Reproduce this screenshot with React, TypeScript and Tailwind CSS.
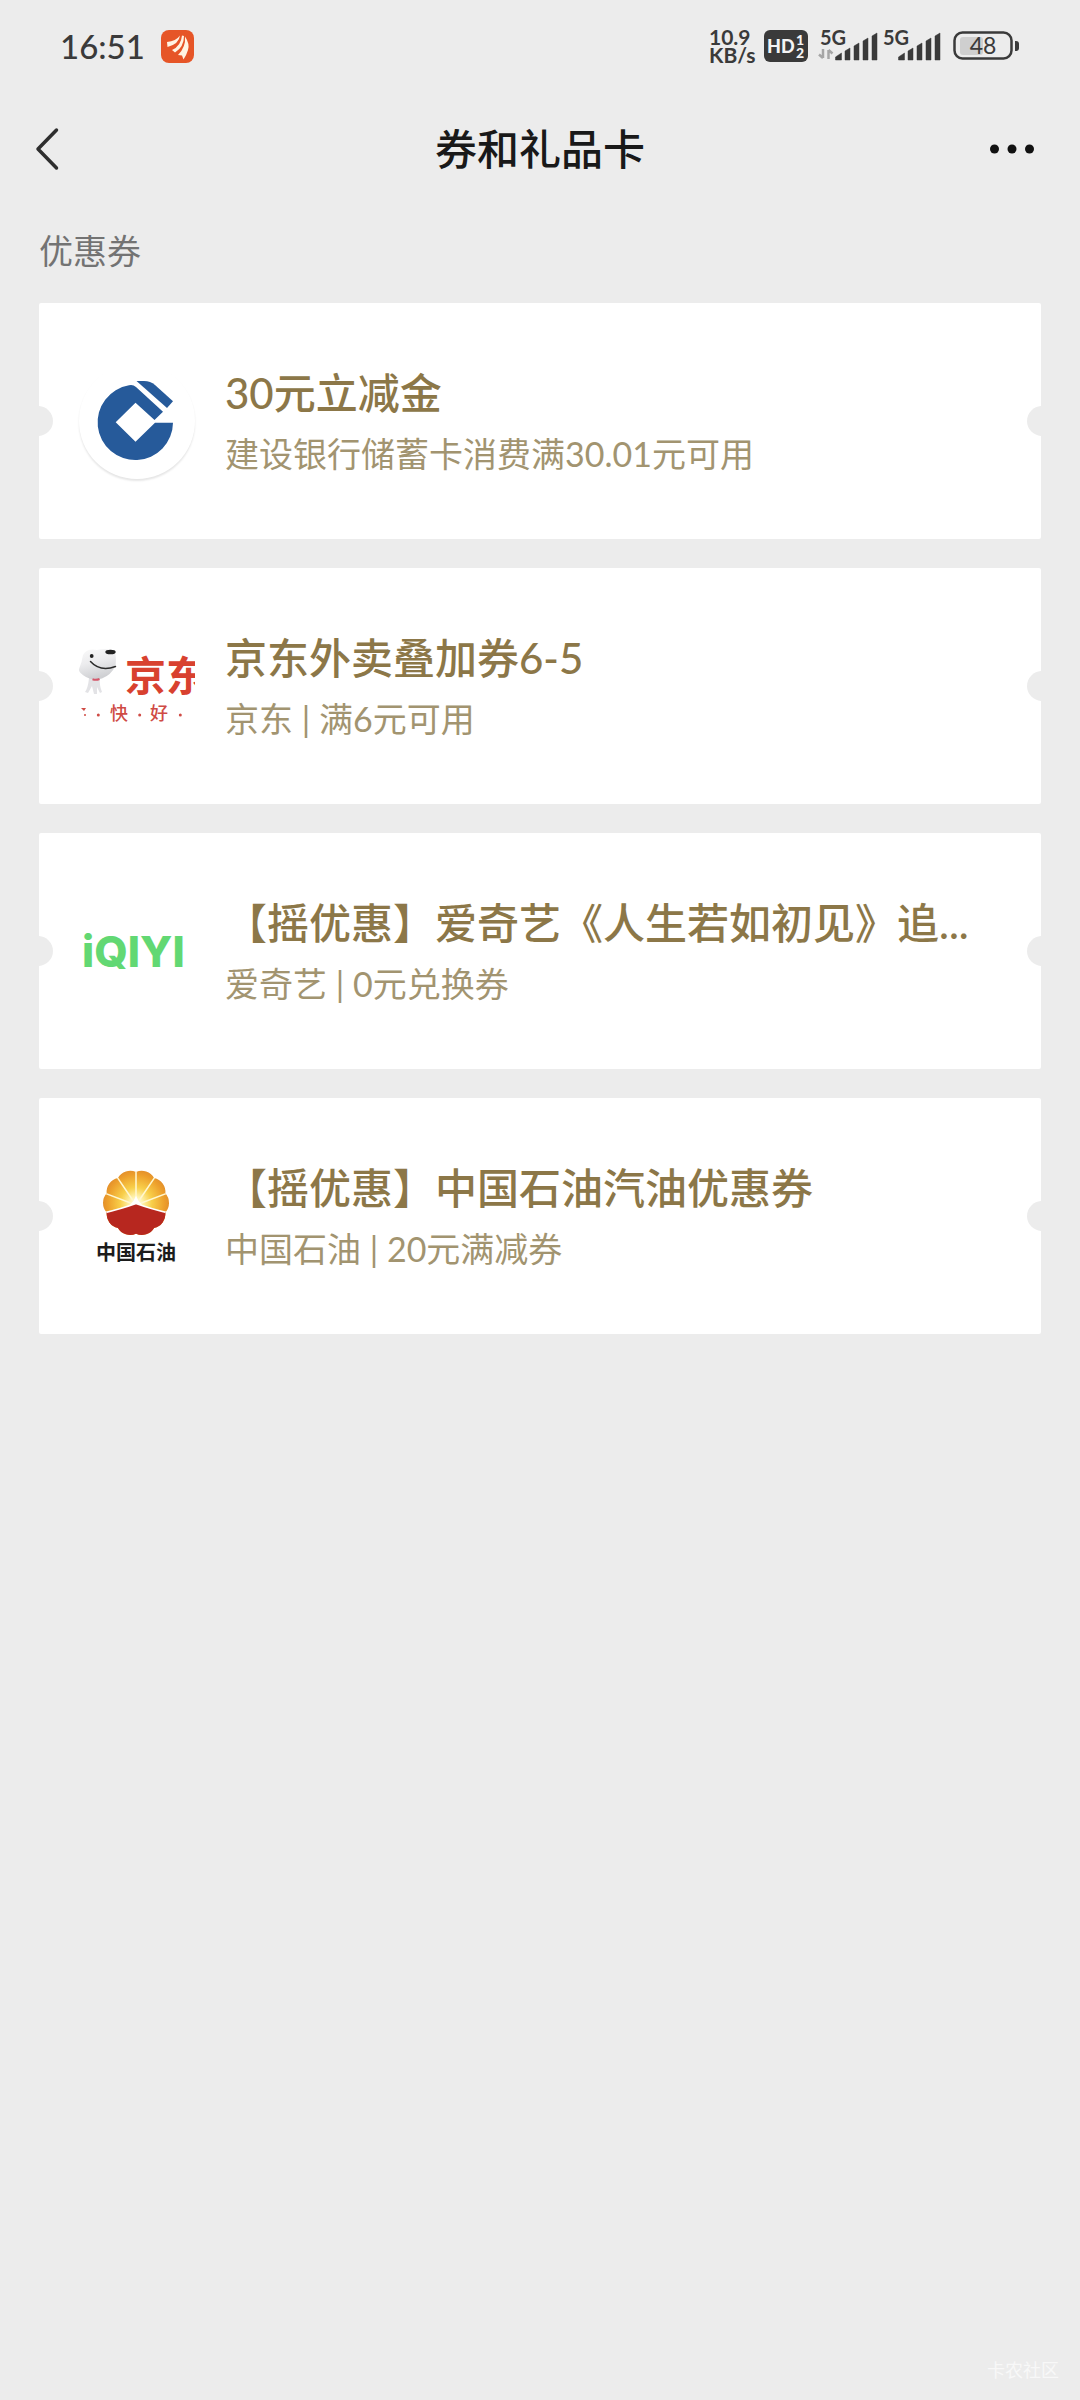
import type { ReactNode } from "react";

function CcbLogo() {
  return (
    <div className="size-[116px] shrink-0 rounded-full bg-white shadow-[0_2px_2px_rgba(0,0,0,0.10)]">
      <svg viewBox="0 0 116 116" className="size-full" role="img" aria-label="中国建设银行">
        <g fill="#265a9a">
          <path d="M94 59.7A37.7 37.7 0 1 1 50 22.2Q54 21.2 57 24L84 48.8L75.5 57L56.5 39.7L36.7 59.3L56.5 78.7L76 59.7Z" />
          <path d="M57.5 18H65Q71.5 18 76 22L94 38.2L88 45Z" />
        </g>
      </svg>
    </div>
  );
}

function JdLogo() {
  return (
    <svg viewBox="0 0 116 116" className="size-[116px] shrink-0" role="img" aria-label="京东">
      <defs>
        <linearGradient id="dog" x1="0" y1="0" x2="0.3" y2="1">
          <stop offset="0" stopColor="#fafafa" />
          <stop offset="0.5" stopColor="#ececee" />
          <stop offset="1" stopColor="#cfd0d3" />
        </linearGradient>
      </defs>
      <path d="M10 50Q9 60 6 64L9 65L13 58L15 66L18 66L18 59L21 65L23 64Q20 57 21 49Z" fill="#e3e3e6" />
      <path d="M4 27Q8 20 18 22Q26 20 34 22Q38 25 36.500 38Q32 47 23 50.500Q13 53 7 49Q-1 44 0 41Q3 34 4 27Z" fill="url(#dog)" />
      <ellipse cx="31.500" cy="24" rx="5.200" ry="2.300" fill="#222" />
      <circle cx="12.700" cy="28" r="1.900" fill="#222" />
      <path d="M11.500 33.500Q21 44 36.500 38.500" fill="none" stroke="#2b2b2b" strokeWidth="1.500" strokeLinecap="round" />
      <path d="M13.500 51.200Q17 52.500 20.500 51" stroke="#d4576a" strokeWidth="2" fill="none" />
      <text x="46" y="63" fontSize="41" fontWeight="700" fill="#d8412f" className="font-['Noto_Sans_CJK_SC',sans-serif]">京东</text>
      <g fill="#cf4b45">
        <path d="M2 80H7L5 83Z" />
        <circle cx="6" cy="87" r="1" />
        <circle cx="19.300" cy="87" r="1.500" />
        <circle cx="60.700" cy="87" r="1.500" />
        <circle cx="101.300" cy="87" r="1.500" />
        <text x="31" y="92" fontSize="18" fontWeight="500" className="font-['Noto_Sans_CJK_SC',sans-serif]">快</text>
        <text x="71" y="92" fontSize="18" fontWeight="500" className="font-['Noto_Sans_CJK_SC',sans-serif]">好</text>
      </g>
    </svg>
  );
}

function IqiyiLogo() {
  return (
    <svg viewBox="0 0 116 116" className="size-[116px] shrink-0" role="img" aria-label="iQIYI">
      <text x="3" y="74" fontSize="43" fontWeight="800" fill="#62d873" className="font-[Inter,sans-serif]">iQIYI</text>
    </svg>
  );
}

const FLOWER =
  "M57 15A14 14 0 0 1 74.600 20.700A14 14 0 0 1 85.500 35.700A14 14 0 0 1 85.500 54.300A14 14 0 0 1 74.600 69.300A14 14 0 0 1 57 75A14 14 0 0 1 39.400 69.300A14 14 0 0 1 28.500 54.300A14 14 0 0 1 28.500 35.700A14 14 0 0 1 39.400 20.700A14 14 0 0 1 57 15Z";

function PetroLogo() {
  return (
    <svg viewBox="0 0 116 116" className="size-[116px] shrink-0" role="img" aria-label="中国石油">
      <defs>
        <radialGradient id="sun" gradientUnits="userSpaceOnUse" cx="57" cy="45" r="34">
          <stop offset="0" stopColor="#fffdf0" />
          <stop offset="0.18" stopColor="#fff3b0" />
          <stop offset="0.45" stopColor="#f8cf4a" />
          <stop offset="0.8" stopColor="#eda02c" />
          <stop offset="1" stopColor="#e08a2a" />
        </radialGradient>
        <clipPath id="petals">
          <path d={FLOWER} />
        </clipPath>
      </defs>
      <g transform="translate(-1.700 -1.400) scale(1.030)">
        <path d={FLOWER} fill="url(#sun)" />
        <g clipPath="url(#petals)">
          <path d="M57 47V10M57 47L36 16M57 47L78 16M57 47L24 34.500M57 47L90 34.500" stroke="#fff7d0" strokeWidth="1.500" />
          <path d="M20 56Q42 51 57 45.500Q72 51 94 56V90H20Z" fill="#b7271f" stroke="#fff" strokeWidth="1.500" />
        </g>
        <path d="M51 47L54.500 43L57 38L59.500 43L63 47L57 45Z" fill="#fff" />
      </g>
      <text x="17" y="102" fontSize="20" fontWeight="700" fill="#1c1c1c" className="font-['Noto_Sans_CJK_SC',sans-serif]">中国石油</text>
    </svg>
  );
}

type Coupon = { title: string; detail: string; logo: ReactNode };

const coupons: Coupon[] = [
  { title: "30元立减金", detail: "建设银行储蓄卡消费满30.01元可用", logo: <CcbLogo /> },
  { title: "京东外卖叠加券6-5", detail: "京东 | 满6元可用", logo: <JdLogo /> },
  { title: "【摇优惠】爱奇艺《人生若如初见》追...", detail: "爱奇艺 | 0元兑换券", logo: <IqiyiLogo /> },
  { title: "【摇优惠】中国石油汽油优惠券", detail: "中国石油 | 20元满减券", logo: <PetroLogo /> },
];

function Signal({ active }: { active?: boolean }) {
  return (
    <svg width="60" height="42" viewBox="0 -4 60 42" fill="#3a3a3a" className="overflow-visible" role="img" aria-label="5G">
      <text x="0" y="16" fontSize="20" fontWeight="700" className="font-[Lato,sans-serif]">5G</text>
      {active && (
        <path d="M3 20V29M3 29L-1 25.500M8.500 30V21M8.500 21L12.500 24.500" stroke="#a6a6a6" strokeWidth="2.500" fill="none" />
      )}
      <path d="M15.500 31V28L21.500 24V31ZM25 31V22L30 19V31ZM34 31V17L39 14V31ZM43 31V12L48 9V31ZM52 31V7L57 4V31Z" stroke="#3a3a3a" strokeWidth="0.500" strokeLinejoin="round" />
    </svg>
  );
}

function StatusBar() {
  return (
    <div className="flex h-[92px] items-center justify-between px-[60px] text-[#3a3a3a]">
      <div className="flex items-center gap-4">
        <time className="text-[33px] leading-none font-medium">16:51</time>
        <svg width="33" height="33" viewBox="0 0 33 33" aria-hidden="true">
          <rect width="33" height="33" rx="8" fill="#e65527" />
          <g fill="#fff4e2">
            <path d="M6 12Q15 11 19 5.500Q18 14 6.500 17Z" />
            <path d="M11 20Q20 16 21 5.500L23 6Q23 17 14 22.500Z" />
            <path d="M17 25Q25 17 24 6.500Q29 14 27 20Q25.500 25 22.500 29.500L21 25.500Z" />
          </g>
        </svg>
      </div>
      <div className="flex items-center">
        <p className="w-[55px] text-[21px] leading-[18px] font-bold">
          10.9
          <br />
          KB/s
        </p>
        <svg width="44" height="32" viewBox="0 0 44 32" className="mr-3" role="img" aria-label="HD 1 2">
          <rect width="44" height="32" rx="6" fill="#3a3a3a" />
          <g fill="#f4f4f4" fontWeight="900" className="font-[Lato,sans-serif]">
            <text x="3" y="23" fontSize="18">HD</text>
            <text x="32" y="15" fontSize="14">1</text>
            <text x="32" y="28" fontSize="14">2</text>
          </g>
        </svg>
        <div className="flex gap-[3px]">
          <Signal active />
          <Signal />
        </div>
        <svg width="67" height="30" viewBox="0 0 67 30" className="ml-[10px]" role="img" aria-label="48%">
          <rect x="7" y="6" width="23" height="18" rx="3" fill="#cfcfcf" />
          <rect x="1.500" y="1.500" width="57" height="26" rx="8" fill="none" stroke="#3a3a3a" strokeWidth="2.500" />
          <path d="M62 10h1a3 3 0 0 1 3 3v4a3 3 0 0 1-3 3h-1z" fill="#3a3a3a" />
          <text x="30" y="23" fontSize="23" textAnchor="middle" fill="#3a3a3a" className="font-[Lato,sans-serif]">48</text>
        </svg>
      </div>
    </div>
  );
}

function CouponCard({ title, detail, logo }: Coupon) {
  return (
    <li>
      <a href="#" className="relative flex h-[236px] items-center gap-[30px] overflow-hidden rounded-xs bg-white pr-[50px] pl-10">
        <span className="absolute top-1/2 -left-4 size-[30px] -translate-y-1/2 rounded-full bg-[#ececec]" />
        <span className="absolute top-1/2 -right-4 size-[30px] -translate-y-1/2 rounded-full bg-[#ececec]" />
        {logo}
        <div className="flex min-w-0 flex-1 flex-col gap-[6px]">
          <h3 className="truncate text-[42px] leading-[60px] font-medium text-[#8c7748]">{title}</h3>
          <p className="truncate text-[34px] leading-[50px] text-[#a29470]">{detail}</p>
        </div>
      </a>
    </li>
  );
}

export default function App() {
  return (
    <div className="flex min-h-screen flex-col bg-[#ececec] font-[Lato,'Noto_Sans_CJK_SC',sans-serif]">
      <StatusBar />
      <header className="grid h-[114px] grid-cols-[1fr_auto_1fr] items-center px-[35px]">
        <button type="button" aria-label="返回" className="w-fit">
          <svg width="26" height="46" viewBox="0 0 26 46" fill="none" stroke="#2e2e2e" strokeWidth="3.500" strokeLinecap="round" strokeLinejoin="round">
            <path d="M21.500 4L3 23L21.500 42" />
          </svg>
        </button>
        <h1 className="text-[42px] leading-[60px] font-medium text-[#191919]">券和礼品卡</h1>
        <button type="button" aria-label="更多" className="w-fit justify-self-end">
          <svg width="57" height="46" viewBox="0 0 57 46" fill="#111">
            <circle cx="6.500" cy="23" r="4.500" />
            <circle cx="24" cy="23" r="4.500" />
            <circle cx="41.500" cy="23" r="4.500" />
          </svg>
        </button>
      </header>
      <main className="px-[39px] pt-5">
        <h2 className="text-[34px] leading-[50px] text-[#737373]">优惠券</h2>
        <ul className="mt-[27px] flex flex-col gap-[29px]">
          {coupons.map((c) => (
            <CouponCard key={c.title} {...c} />
          ))}
        </ul>
      </main>
      <footer className="mt-auto pr-[21px] pb-[18px] text-right text-[18px] leading-6 text-[#f8f8f8]">卡农社区</footer>
    </div>
  );
}
